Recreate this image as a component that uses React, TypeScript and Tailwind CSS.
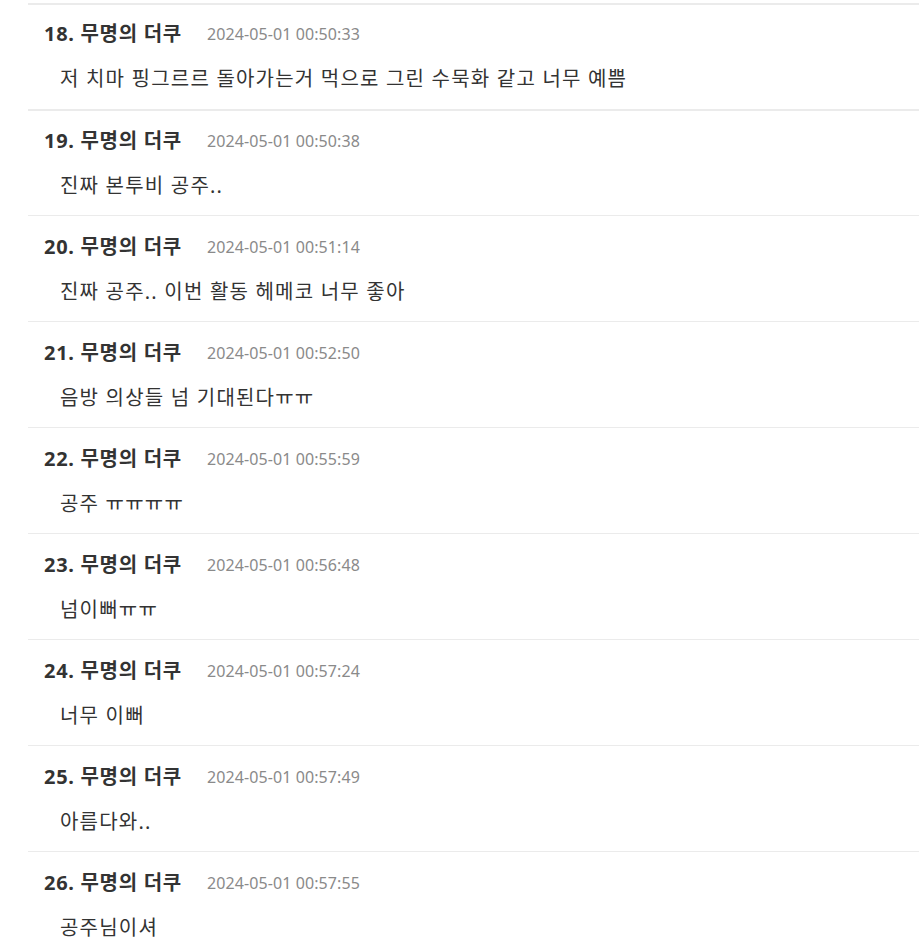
import React from "react";

const rows = [
  { n: 18, t: "2024-05-01 00:50:33", c: "저 치마 핑그르르 돌아가는거 먹으로 그린 수묵화 같고 너무 예쁨" },
  { n: 19, t: "2024-05-01 00:50:38", c: "진짜 본투비 공주.." },
  { n: 20, t: "2024-05-01 00:51:14", c: "진짜 공주.. 이번 활동 헤메코 너무 좋아" },
  { n: 21, t: "2024-05-01 00:52:50", c: "음방 의상들 넘 기대된다ㅠㅠ" },
  { n: 22, t: "2024-05-01 00:55:59", c: "공주 ㅠㅠㅠㅠ" },
  { n: 23, t: "2024-05-01 00:56:48", c: "넘이뻐ㅠㅠ" },
  { n: 24, t: "2024-05-01 00:57:24", c: "너무 이뻐" },
  { n: 25, t: "2024-05-01 00:57:49", c: "아름다와.." },
  { n: 26, t: "2024-05-01 00:57:55", c: "공주님이셔" },
];

export default function App() {
  return (
    <div
      className="min-h-[951px] w-[919px] overflow-hidden bg-white pt-[3px]"
      style={{ fontFamily: '"Noto Sans", "Noto Sans CJK KR", sans-serif' }}
    >
      <div className="ml-[28px] border-t-2 border-[#ebebeb]">
        {rows.map((r, i) => (
          <div
            key={r.n}
            className={
              i === 0
                ? "h-[106px] border-b-2 border-[#ebebeb] pt-[17px]"
                : i === 1
                ? "h-[105px] border-b border-[#ebebeb] pt-[18px]"
                : "h-[106px] border-b border-[#ebebeb] pt-[19px]"
            }
          >
            <div className="flex h-[24px] items-center pl-[16px]">
              <span className="text-[20px] font-bold tracking-[0.7px] text-[#333]">
                {r.n}. 무명의 더쿠
              </span>
              <span className="ml-[25px] text-[16px] tracking-[0.1px] text-[#8a8a8a]">{r.t}</span>
            </div>
            <div className="mt-[19px] flex h-[28px] items-center pl-[32px] text-[20px] tracking-[1.2px] text-[#333]">
              {r.c}
            </div>
          </div>
        ))}
      </div>
    </div>
  );
}
